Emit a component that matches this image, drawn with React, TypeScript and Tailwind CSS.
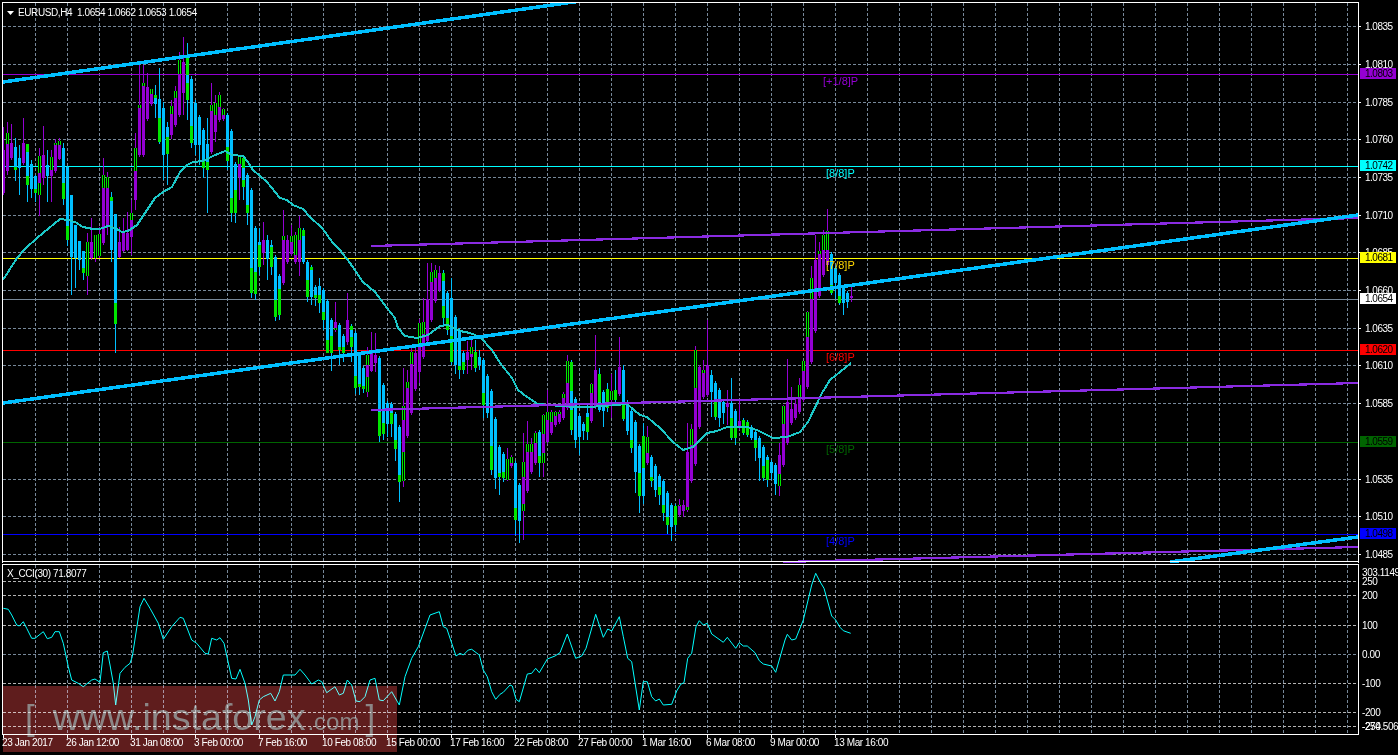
import React from 'react';

// [high, bodyTop, bodyBottom, low, purple?, green on top, green on bottom]
type Candle = [number, number, number, number, number, number, number];

const candles: Candle[] = [
  [127,150,193,195,1,0,0],[122,133,171,175,1,11,0],[124,143,158,160,1,0,0],[138,147,170,181,0,0,3],[145,158,168,195,0,0,0],
  [118,143,163,165,1,0,0],[144,144,185,202,0,8,9],[160,164,189,198,0,0,0],[175,176,193,202,0,0,4],[148,156,195,216,1,17,12],
  [126,155,178,185,1,0,0],[150,165,176,202,0,0,0],[150,157,176,202,1,13,0],[139,143,171,173,1,2,0],[138,141,159,160,1,4,0],
  [143,148,199,205,0,0,16],[166,167,240,246,0,0,14],[195,195,257,295,0,0,0],[225,225,258,288,0,0,0],[241,241,260,270,0,0,0],
  [251,251,273,280,0,0,5],[233,242,276,295,1,34,0],[218,242,258,260,1,0,0],[235,235,258,262,1,23,0],[227,234,256,258,1,22,0],
  [158,175,243,245,1,13,0],[172,177,227,235,1,11,0],[192,197,250,262,0,4,0],[214,214,324,353,0,0,21],[227,242,257,258,1,0,0],
  [218,233,251,252,1,0,0],[212,233,250,251,1,0,0],[200,213,237,255,1,7,0],[133,148,200,210,1,23,0],[65,105,155,157,1,3,0],
  [65,83,155,157,1,3,0],[73,87,119,121,1,0,0],[89,89,104,106,1,5,0],[85,95,104,118,0,3,0],[68,99,142,144,0,0,24],
  [102,108,155,180,0,0,0],[122,127,154,185,0,0,17],[100,106,135,139,1,8,0],[86,91,125,127,1,7,0],[52,60,115,117,1,14,0],
  [37,62,93,115,1,0,0],[43,57,100,120,0,18,17],[76,79,143,148,0,0,17],[100,103,145,155,0,0,0],[115,117,145,165,0,0,0],
  [128,130,168,178,0,0,8],[118,144,170,213,0,0,8],[83,105,152,154,1,6,0],[95,103,132,142,1,12,0],[92,95,120,122,1,12,0],
  [108,109,119,121,1,6,0],[113,115,161,170,0,0,14],[129,131,213,222,0,0,15],[162,164,213,223,0,0,23],[155,157,177,200,1,7,0],
  [155,158,187,200,0,10,7],[173,175,213,225,0,0,8],[188,190,293,298,0,0,25],[226,228,294,300,0,0,22],[228,242,267,275,0,0,22],
  [222,240,253,265,1,0,0],[235,240,259,280,0,0,0],[240,245,267,275,0,0,20],[255,257,317,321,0,0,17],[274,276,315,320,0,0,26],
  [210,236,283,285,1,4,0],[235,240,262,264,1,0,0],[225,236,254,256,1,6,0],[232,235,262,264,1,20,0],[216,228,262,276,1,12,0],
  [228,230,262,264,0,6,0],[260,262,297,302,0,0,17],[265,267,297,305,0,3,0],[285,287,298,306,0,0,3],[278,286,303,313,0,0,8],
  [288,290,320,330,0,0,8],[299,301,353,353,0,0,13],[318,320,353,371,0,0,17],[302,322,330,332,1,0,2],[323,325,350,365,0,0,3],
  [334,336,353,362,0,0,6],[293,320,342,345,1,0,0],[324,326,347,362,0,4,10],[331,333,388,394,0,0,12],[353,355,387,395,0,0,3],
  [366,368,389,393,0,0,3],[347,355,392,397,1,10,15],[332,352,371,372,1,0,0],[333,355,363,372,1,0,0],[356,358,436,442,0,0,24],
  [383,385,434,440,0,0,11],[401,403,424,437,0,0,0],[402,404,424,437,0,0,11],[412,414,449,461,0,0,9],[425,427,482,502,0,0,7],
  [368,406,481,487,1,14,29],[370,382,436,438,1,6,0],[347,352,413,415,1,12,0],[348,353,389,391,1,0,0],[319,323,372,383,1,24,0],
  [298,322,357,359,1,12,0],[263,299,341,343,1,0,0],[263,272,320,322,1,10,0],[265,270,301,303,1,8,0],[266,273,290,292,1,0,0],
  [270,273,318,325,0,8,12],[291,293,330,335,0,0,12],[278,298,362,365,0,0,26],[315,317,365,374,0,0,0],[328,330,370,379,0,0,4],
  [351,353,370,374,0,0,8],[341,352,360,374,1,0,0],[338,347,357,370,1,7,0],[340,352,368,372,0,16,0],[350,357,365,370,0,0,0],
  [358,360,405,418,0,0,12],[374,376,413,418,0,0,0],[389,391,470,475,0,0,24],[417,419,478,489,0,0,0],[445,447,477,495,0,0,4],
  [452,454,478,482,0,0,6],[448,459,480,481,1,21,0],[455,457,466,468,1,6,0],[461,463,520,535,0,0,12],[483,485,521,543,0,0,0],
  [433,462,511,540,1,15,7],[421,444,491,493,1,8,0],[438,444,472,474,1,8,0],[431,433,463,465,1,10,0],[430,432,463,477,0,0,7],
  [414,415,463,477,1,19,10],[390,412,442,444,1,8,0],[410,412,433,435,1,10,0],[411,412,425,427,1,4,0],[410,412,422,424,1,2,0],
  [392,394,418,420,1,4,0],[355,361,408,410,1,22,0],[360,362,430,435,0,29,20],[397,399,440,448,0,0,0],[414,416,437,455,0,0,0],
  [422,424,431,440,0,0,0],[405,413,432,440,0,0,15],[383,384,421,423,1,9,0],[335,370,407,409,1,0,0],[368,374,410,412,0,28,0],
  [390,392,411,427,0,0,0],[383,389,408,412,0,0,19],[374,391,400,418,1,9,0],[370,390,400,402,0,0,10],[337,367,394,396,1,0,0],
  [365,370,419,421,0,0,16],[400,402,431,435,0,0,0],[409,411,448,453,0,0,8],[420,422,472,493,0,0,0],[444,446,496,513,0,0,23],
  [423,436,496,504,0,32,0],[426,437,463,465,1,16,0],[455,457,481,487,0,0,4],[464,466,490,497,0,0,0],[474,476,495,505,0,0,8],
  [479,481,513,521,0,0,8],[491,493,525,534,0,0,8],[503,505,527,541,0,0,0],[504,506,525,532,0,0,19],[499,505,515,517,1,1,0],
  [500,505,511,517,1,0,0],[423,452,510,512,1,0,3],[424,429,481,483,1,16,0],[346,350,464,466,1,38,0],[365,367,427,429,1,0,0],
  [360,370,397,399,1,3,0],[320,365,395,397,1,0,0],[370,375,392,417,0,0,0],[381,383,417,420,0,0,15],[388,390,418,427,0,0,0],
  [400,402,413,424,0,0,0],[390,403,407,425,1,0,0],[378,403,438,440,0,0,20],[409,411,438,445,0,0,10],[400,421,428,430,1,0,0],
  [418,420,433,435,0,13,0],[420,422,435,437,0,13,0],[425,427,438,440,0,0,0],[430,432,448,461,0,0,8],[436,438,458,481,0,0,0],
  [445,447,478,481,0,0,12],[455,457,480,487,0,0,20],[460,462,473,480,0,0,0],[463,465,484,495,0,0,0],[443,455,486,496,1,0,12],
  [405,406,465,467,1,18,0],[359,402,443,445,1,0,0],[387,409,423,425,1,0,0],[397,404,418,420,1,0,0],[378,385,412,414,1,12,0],
  [361,361,400,402,1,10,0],[311,312,387,389,1,25,0],[266,278,362,364,1,21,0],[235,260,331,333,1,0,0],[242,251,296,298,1,3,0],
  [230,235,275,277,1,15,0],[209,231,265,267,1,19,0],[252,254,293,295,0,0,8],[266,268,283,299,0,0,0],[273,275,303,305,0,0,7],
  [285,287,303,315,0,0,0],[291,293,302,308,0,0,0],[287,296,298,302,1,0,0],
];

const maLine =
  '3,280 17,258 25,249 37,238 43,233 60,219 68,220 75,222 83,227 93,229 100,229 108,226 115,228 122,232 128,231 137,225 147,210 155,198 163,192 172,187 180,172 187,165 193,162 203,161 213,156 225,151 232,155 243,156 248,162 253,170 267,182 280,198 287,200 293,205 303,209 310,217 322,228 333,243 340,250 350,263 363,282 375,292 387,308 395,318 398,328 405,336 417,338 428,335 440,326 448,325 460,331 470,333 480,337 492,350 500,363 512,378 518,390 527,397 538,404 560,406 577,407 590,407 627,404 640,415 647,417 660,428 673,442 683,450 693,447 707,433 717,431 727,427 747,427 757,430 773,438 787,437 800,432 808,422 822,393 830,380 840,372 851,363';

// cci traced in 3x crop coordinates
const cciLeft = [[10,145],[25,148],[35,165],[50,195],[58,198],[70,185],[80,205],[95,235],[105,235],[130,215],[142,236],[155,232],[165,215],[178,215],[190,250],[205,320],[215,360],[235,370],[250,380],[275,360],[285,357],[300,367],[310,278],[322,273],[330,315],[340,370],[347,435],[360,340],[375,322],[390,310],[397,290],[420,140],[432,115],[450,145],[475,190],[490,238],[515,200],[540,172],[550,175],[575,240],[590,250],[615,280],[625,282],[635,235],[650,240],[660,233],[672,250],[695,355],[708,357],[720,328],[735,370],[745,420],[755,495],[765,470],[778,420],[790,410],[812,400],[825,423],[838,395],[850,345],[885,345],[900,328],[915,345],[935,372],[955,360],[965,365],[980,398],[1005,380],[1018,405],[1030,400],[1042,360],[1055,375],[1068,423],[1080,425],[1095,410],[1110,360],[1125,355],[1138,420],[1150,422],[1175,395],[1198,435],[1215,350],[1235,295],[1255,260],[1290,165],[1318,155],[1330,200],[1340,205],[1368,288],[1380,280]];
const cciRight = [[10,285],[25,270],[35,268],[58,285],[70,330],[82,350],[95,395],[107,418],[120,403],[130,397],[150,375],[157,378],[168,418],[178,425],[202,342],[215,340],[227,325],[238,338],[262,297],[285,288],[300,278],[322,222],[347,295],[365,288],[378,265],[407,163],[430,232],[443,207],[455,213],[478,170],[490,230],[503,295],[515,305],[538,450],[550,365],[562,365],[575,410],[587,423],[598,417],[610,435],[635,433],[650,393],[662,373],[672,368],[683,295],[695,280],[708,200],[718,182],[730,195],[742,190],[755,222],[790,247],[802,232],[827,265],[838,248],[850,258],[862,258],[885,278],[898,302],[910,312],[935,318],[947,337],[975,240],[982,223],[995,240],[1007,237],[1030,180],[1055,75],[1067,40],[1080,65],[1092,85],[1115,168],[1127,180],[1140,202],[1150,212],[1172,220]];
const cciLine = [
  ...cciLeft.map(([x, y]) => `${(x / 3).toFixed(1)},${(560 + y / 3).toFixed(1)}`),
  ...cciRight.map(([x, y]) => `${(460 + x / 3).toFixed(1)},${(560 + y / 3).toFixed(1)}`),
].join(' ');

const gridX = Array.from({ length: 42 }, (_, i) => 35 + i * 32);
const gridY = [26, 64, 102, 139, 177, 215, 252, 290, 328, 365, 403, 442, 479, 516, 554];

const levels = [
  { y: 74, color: '#9400d3', price: '1.0803', text: '#000000', tag: '[+1/8]P', tagX: 823, tagColor: '#9400d3' },
  { y: 166, color: '#00ffff', price: '1.0742', text: '#000000', tag: '[8/8]P', tagX: 826, tagColor: '#00ffff' },
  { y: 258, color: '#ffff00', price: '1.0681', text: '#000000', tag: '[7/8]P', tagX: 826, tagColor: '#ffd700' },
  { y: 299, color: '#778899', price: '1.0654', text: '#000000', box: '#ffffff' },
  { y: 350, color: '#ff0000', price: '1.0620', text: '#000000', tag: '[6/8]P', tagX: 826, tagColor: '#ff0000' },
  { y: 442, color: '#006400', price: '1.0559', text: '#000000', tag: '[5/8]P', tagX: 826, tagColor: '#006400' },
  { y: 534, color: '#0000ff', price: '1.0498', text: '#000000', tag: '[4/8]P', tagX: 826, tagColor: '#0000ff' },
];

const priceTicks: [string, number][] = [
  ['1.0835', 26], ['1.0810', 64], ['1.0785', 102], ['1.0760', 139], ['1.0735', 177], ['1.0710', 215], ['1.0685', 252],
  ['1.0660', 290], ['1.0635', 328], ['1.0610', 365], ['1.0585', 403], ['1.0535', 479], ['1.0510', 516], ['1.0485', 554],
];
const cciLevels: [string, number][] = [['250', 581], ['200', 595], ['100', 625], ['0.00', 654], ['-100', 683], ['-200', 712], ['-250', 726]];
const timeLabels = ['23 Jan 2017', '26 Jan 12:00', '31 Jan 08:00', '3 Feb 00:00', '7 Feb 16:00', '10 Feb 08:00', '15 Feb 00:00', '17 Feb 16:00', '22 Feb 08:00', '27 Feb 00:00', '1 Mar 16:00', '6 Mar 08:00', '9 Mar 00:00', '13 Mar 16:00'];

const GREEN = '#00e600';
const BLUE = '#00bfff';
const PURPLE = '#9400d3';
const VIOLET = '#8a2be2';

function CandleBar({ c, i }: { c: Candle; i: number }) {
  const [high, top, bottom, low, purple, greenTop, greenBottom] = c;
  const x = 2 + i * 4;
  const color = purple ? PURPLE : BLUE;
  const green = (y: number, h: number) =>
    purple ? (
      <g>
        <rect x={x} y={y} width={3} height={h} fill="#000000" />
        <rect x={x} y={y} width={1} height={h} fill={GREEN} />
        <rect x={x + 2} y={y} width={1} height={h} fill={GREEN} />
      </g>
    ) : (
      <rect x={x} y={y} width={3} height={h} fill={GREEN} />
    );
  return (
    <g>
      <rect x={x + 1} y={high} width={1} height={low - high} fill={color} />
      <rect x={x} y={top} width={3} height={bottom - top} fill={color} />
      {greenTop > 0 && green(top, greenTop)}
      {greenBottom > 0 && green(bottom - greenBottom, greenBottom)}
    </g>
  );
}

function GridLines({ ys, y1, y2, levelColor }: { ys: number[]; y1: number; y2: number; levelColor?: string }) {
  return (
    <g strokeWidth={1} strokeDasharray="3 2" fill="none">
      {gridX.map((x) => (
        <line key={x} x1={x + 0.5} x2={x + 0.5} y1={y1} y2={y2} stroke="#778899" />
      ))}
      {ys.map((y) => (
        <line key={y} x1={3} x2={1358} y1={y + 0.5} y2={y + 0.5} stroke={levelColor && y !== 654 ? levelColor : '#778899'} />
      ))}
    </g>
  );
}

export default function App() {
  return (
    <div className="relative w-[1398px] h-[755px] bg-black overflow-hidden pt-[2px] font-['Liberation_Sans',Arial,sans-serif] text-[10px] leading-[10px] text-white">
      {/* price pane */}
      <div className="flex h-[561px]">
        <div className="relative ml-[2px] w-[1357px] border border-b-0 border-white">
          <svg width={1355} height={560} viewBox="3 3 1355 560" shapeRendering="crispEdges" className="block">
            <GridLines ys={gridY} y1={3} y2={562} />
            {levels.map((l) => (
              <rect key={l.y} x={3} y={l.y} width={1355} height={1} fill={l.color} />
            ))}
            {candles.map((c, i) => (
              <CandleBar key={i} c={c} i={i} />
            ))}
            <polyline points={maLine} fill="none" stroke="#1cc8c8" strokeWidth={2} />
            <g fill="none" stroke={VIOLET} strokeWidth={2.2}>
              <line x1={371} y1={246} x2={1358} y2={218} />
              <line x1={371} y1={410} x2={1358} y2={383} />
              <line x1={783} y1={562} x2={1358} y2={547} />
            </g>
            <g fill="none" stroke={BLUE} strokeWidth={3.5}>
              <line x1={3} y1={82} x2={588} y2={0} />
              <line x1={3} y1={403} x2={1358} y2={215} />
              <line x1={1170} y1={562} x2={1358} y2={537} />
            </g>
            {levels.map((l) =>
              l.tag ? (
                <text key={l.y} x={l.tagX} y={l.y + 11} fontSize={11} fill={l.tagColor} shapeRendering="auto">
                  {l.tag}
                </text>
              ) : null,
            )}
          </svg>
          <div className="absolute left-[4px] top-[5px] flex items-center gap-[4px] whitespace-nowrap tracking-[-0.4px]">
            <svg width={7} height={4} viewBox="0 0 7 4" className="block">
              <path d="M0 0H7L3.5 4Z" fill="#ffffff" />
            </svg>
            <span>EURUSD,H4&nbsp;&nbsp;1.0654 1.0662 1.0653 1.0654</span>
          </div>
        </div>
        <svg width={39} height={561} viewBox="1359 2 39 561" className="block">
          {priceTicks.map(([label, y]) => (
            <g key={label}>
              <rect x={1359} y={y} width={2} height={1} fill="#ffffff" />
              <text x={1365} y={y + 4} fontSize={10} letterSpacing={-0.5} fill="#ffffff">
                {label}
              </text>
            </g>
          ))}
          {levels.map((l) => (
            <g key={l.y}>
              <rect x={1360} y={l.y - 6} width={36} height={11} fill={l.box ?? l.color} />
              <text x={1365} y={l.y + 3} fontSize={10} letterSpacing={-0.5} fill={l.text}>
                {l.price}
              </text>
            </g>
          ))}
        </svg>
      </div>

      {/* cci pane */}
      <div className="flex h-[171px] mt-[1px]">
        <div className="relative ml-[2px] w-[1357px] border-x border-white">
          <div className="absolute -top-[3px] -left-px -right-px h-px bg-white" />
          <div className="h-px bg-white -mx-px" />
          <svg width={1355} height={169} viewBox="3 565 1355 169" className="block">
            <g shapeRendering="crispEdges">
              <GridLines ys={cciLevels.map(([, y]) => y)} y1={565} y2={734} levelColor="#b4b4b4" />
            </g>
            <polyline points={cciLine} fill="none" stroke="#00ffff" strokeWidth={1} />
          </svg>
          <div className="h-px bg-white -mx-px" />
          <span className="absolute left-[4px] top-[5px] whitespace-nowrap tracking-[-0.4px]">X_CCI(30) 71.8077</span>
        </div>
        <svg width={39} height={171} viewBox="1359 564 39 171" className="block">
          <text x={1362} y={576} fontSize={10} letterSpacing={-0.4} fill="#ffffff">303.1149</text>
          {cciLevels.map(([label, y]) => (
            <text key={label} x={1362} y={y + 4} fontSize={10} letterSpacing={-0.4} fill="#ffffff">
              {label}
            </text>
          ))}
          <text x={1362} y={730} fontSize={10} letterSpacing={-0.4} fill="#ffffff">-274.506</text>
        </svg>
      </div>

      {/* time axis */}
      <div className="flex pl-[2px]">
        {timeLabels.map((t) => (
          <div key={t} className="w-[64px] shrink-0 whitespace-nowrap tracking-[-0.4px]">
            <div className="ml-px w-px h-[3px] bg-white" />
            <div>{t}</div>
          </div>
        ))}
      </div>

      {/* watermark */}
      <div className="absolute left-[3px] top-[686px] w-[394px] h-[66px] bg-[#5f1d1d] mix-blend-screen flex items-baseline pl-[22px] pt-[12px] text-[#8c8686] whitespace-nowrap leading-[38px]">
        <span className="text-[35px] font-light">[</span>
        <span className="text-[37.6px] ml-[18px]">www.instaforex</span>
        <span className="text-[24px] ml-[2px]">.com</span>
        <span className="text-[35px] ml-[6px]">]</span>
      </div>
    </div>
  );
}
